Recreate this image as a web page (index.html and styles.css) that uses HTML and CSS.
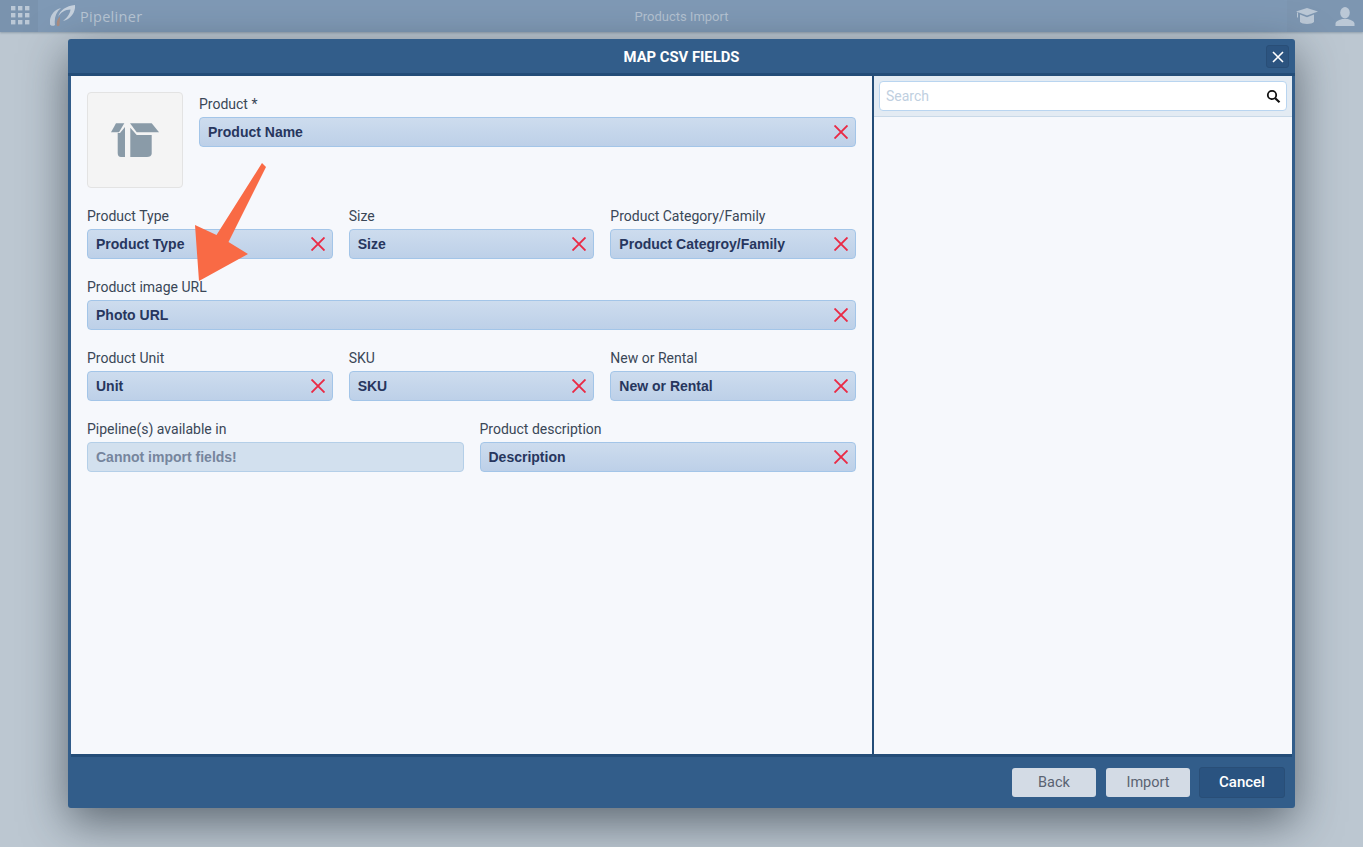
FILE: index.html
```html
<!DOCTYPE html>
<html lang="en">
<head>
<meta charset="utf-8">
<title>Products Import</title>
<link rel="stylesheet" href="styles.css">
</head>
<body>
<header class="topbar">
  <div class="apps">
    <svg class="apps-icon" width="20" height="20" viewBox="0 0 20 20"><g fill="#bbc8d6"><rect x="1" y="1" width="4.4" height="4.4"/><rect x="8" y="1" width="4.4" height="4.4"/><rect x="15" y="1" width="4.4" height="4.4"/><rect x="1" y="8" width="4.4" height="4.4"/><rect x="8" y="8" width="4.4" height="4.4"/><rect x="15" y="8" width="4.4" height="4.4"/><rect x="1" y="15" width="4.4" height="4.4"/><rect x="8" y="15" width="4.4" height="4.4"/><rect x="15" y="15" width="4.4" height="4.4"/></g></svg>
  </div>
  <div class="brand">
    <svg width="27" height="22" viewBox="50 5 27 22"><path d="M50 24.500C49 17 53 10 61 8c-5 4-7 10-6 17-1.500 1.200-3.800 1.200-5-.5z" fill="#c0ccd9"/><path d="M57 26c-1-3 0-6.500 3-9.500l-.5 9c-.8.700-1.700.800-2.500.5z" fill="#ab8d80"/><path d="M58 17c2-7 8-11 17-12 1 7-5 15-12 16 4-3 7-7 7.500-11.500C65 9.500 60 13 58 17z" fill="#c6d1dd"/></svg>
    <span class="brand-name">Pipeliner</span>
  </div>
  <div class="page-title">Products Import</div>
  <div class="top-action">
    <svg class="cap" width="22" height="17" viewBox="0 0 22 17"><path d="M11 0l11 3.500L11 7.500 0 3.500z" fill="#bbc8d6"/><path d="M4 6.500l7 2.700 7-2.700V14c-2 2.600-12 2.600-14 0z" fill="#bbc8d6"/><path d="M1.500 4.500v5" stroke="#bbc8d6" stroke-width="1" fill="none"/></svg>
  </div>
  <div class="top-action">
    <svg class="person" width="20" height="19" viewBox="0 0 20 19"><ellipse cx="10" cy="5.700" rx="4.800" ry="5.700" fill="#bbc8d6"/><path d="M.5 19v-2.500c0-2.500 4-3.500 6.500-4.500h6c2.500 1 6.500 2 6.500 4.500V19z" fill="#bbc8d6"/></svg>
  </div>
</header>

<section class="dialog">
  <div class="dialog-head">
    <h1 class="dialog-title">MAP CSV FIELDS</h1>
    <button class="close-btn" aria-label="Close">
      <svg width="12" height="12" viewBox="0 0 12 12"><path d="M1 1l10 10M11 1L1 11" stroke="#fff" stroke-width="1.600" fill="none"/></svg>
    </button>
  </div>
  <div class="dialog-body">
    <div class="form">
      <div class="row row-top">
        <div class="thumb">
          <svg width="48" height="35" viewBox="0 0 48 35"><g fill="#8a9ba8"><path d="M0 9.300L5 .3h8.300L8 9.300z"/><path d="M6.700 10H9l5-6v30h-4c-2.200 0-3.300-1.500-3.300-4z"/><path d="M19 .3h21.700L48 9.300H25.700z"/><path d="M19.300 4.700l6.400 7.300h15v18.700c0 2-2.200 3.300-4.700 3.300H19.300z"/></g></svg>
        </div>
        <div class="group">
          <label class="lbl">Product *</label>
          <div class="field"><span>Product Name</span><svg class="x" viewBox="0 0 14 14"><path d="M.5 .5l13 13M13.500 .5l-13 13"/></svg></div>
        </div>
      </div>
      <div class="row">
        <div class="group">
          <label class="lbl">Product Type</label>
          <div class="field"><span>Product Type</span><svg class="x" viewBox="0 0 14 14"><path d="M.5 .5l13 13M13.500 .5l-13 13"/></svg></div>
        </div>
        <div class="group">
          <label class="lbl">Size</label>
          <div class="field"><span>Size</span><svg class="x" viewBox="0 0 14 14"><path d="M.5 .5l13 13M13.500 .5l-13 13"/></svg></div>
        </div>
        <div class="group">
          <label class="lbl">Product Category/Family</label>
          <div class="field"><span>Product Categroy/Family</span><svg class="x" viewBox="0 0 14 14"><path d="M.5 .5l13 13M13.500 .5l-13 13"/></svg></div>
        </div>
      </div>
      <div class="row">
        <div class="group">
          <label class="lbl">Product image URL</label>
          <div class="field"><span>Photo URL</span><svg class="x" viewBox="0 0 14 14"><path d="M.5 .5l13 13M13.500 .5l-13 13"/></svg></div>
        </div>
      </div>
      <div class="row">
        <div class="group">
          <label class="lbl">Product Unit</label>
          <div class="field"><span>Unit</span><svg class="x" viewBox="0 0 14 14"><path d="M.5 .5l13 13M13.500 .5l-13 13"/></svg></div>
        </div>
        <div class="group">
          <label class="lbl">SKU</label>
          <div class="field"><span>SKU</span><svg class="x" viewBox="0 0 14 14"><path d="M.5 .5l13 13M13.500 .5l-13 13"/></svg></div>
        </div>
        <div class="group">
          <label class="lbl">New or Rental</label>
          <div class="field"><span>New or Rental</span><svg class="x" viewBox="0 0 14 14"><path d="M.5 .5l13 13M13.500 .5l-13 13"/></svg></div>
        </div>
      </div>
      <div class="row">
        <div class="group">
          <label class="lbl">Pipeline(s) available in</label>
          <div class="field field-off"><span>Cannot import fields!</span></div>
        </div>
        <div class="group">
          <label class="lbl">Product description</label>
          <div class="field"><span>Description</span><svg class="x" viewBox="0 0 14 14"><path d="M.5 .5l13 13M13.500 .5l-13 13"/></svg></div>
        </div>
      </div>
    </div>
    <aside class="side">
      <div class="search-bar">
        <div class="search">
          <span class="search-ph">Search</span>
          <svg width="15" height="15" viewBox="0 0 15 15"><circle cx="6" cy="6" r="4.200" fill="none" stroke="#111" stroke-width="1.800"/><path d="M9.200 9.200l4.300 4" stroke="#111" stroke-width="2.200" fill="none"/></svg>
        </div>
      </div>
    </aside>
  </div>
  <div class="dialog-foot">
    <button class="btn">Back</button>
    <button class="btn btn-import">Import</button>
    <button class="btn btn-primary">Cancel</button>
  </div>
</section>

<svg class="arrow" width="90" height="130" viewBox="0 0 90 130"><polygon points="72,1 76,5 38.500,80 58,92 9,119 5,63 26.500,73" fill="#f96a45"/></svg>
</body>
</html>
```

FILE: styles.css
```css
* { box-sizing: border-box; }
html, body { height: 100%; }
body {
  margin: 0;
  height: 847px;
  overflow: hidden;
  background: #bcc7d1;
  font-family: Roboto, "Liberation Sans", sans-serif;
  position: relative;
}
.topbar {
  height: 32px;
  background: #7f99b5;
  display: flex;
  align-items: center;
  position: relative;
  box-shadow: 0 1px 2px rgba(60, 80, 100, .35);
}
.apps {
  width: 38px;
  height: 32px;
  padding: 0 0 2px 2px;
  background: #7a93ae;
  display: flex;
  align-items: center;
  justify-content: center;
}
.brand {
  display: flex;
  align-items: center;
  gap: 3px;
  margin-left: 12px;
  flex: 1;
}
.brand-name {
  font-family: "Open Sans", sans-serif;
  font-size: 14.500px;
  color: #b9c6d4;
  letter-spacing: .3px;
}
.page-title {
  position: absolute;
  left: 0;
  right: 0;
  text-align: center;
  font-size: 13px;
  color: #b4c2d1;
  pointer-events: none;
}
.top-action {
  width: 38px;
  height: 32px;
  padding-left: 2px;
  background: #7d96b1;
  display: flex;
  align-items: center;
  justify-content: center;
}
.dialog {
  position: absolute;
  left: 68px;
  top: 39px;
  width: 1227px;
  height: 769px;
  background: #325d8a;
  border-radius: 3px;
  box-shadow: 0 14px 45px rgba(30, 40, 50, .6);
  display: flex;
  flex-direction: column;
}
.dialog-head {
  height: 37px;
  flex: none;
  border-bottom: 3px solid #244d78;
  display: flex;
  align-items: center;
  justify-content: center;
  position: relative;
}
.dialog-title {
  margin: 0;
  font-size: 14.800px;
  font-weight: 700;
  color: #fff;
  position: relative;
  top: 1px;
}
.close-btn {
  position: absolute;
  right: 6px;
  top: 6px;
  width: 23px;
  height: 23px;
  padding: 0;
  background: #2c5480;
  border: 1px solid #294e77;
  border-radius: 3px;
  display: flex;
  align-items: center;
  justify-content: center;
}
.dialog-body {
  height: 681px;
  flex: none;
  margin: 0 3px;
  display: flex;
  background: #f6f8fc;
  border-bottom: 3px solid #244d78;
}
.form {
  width: 801px;
  padding: 16px;
  display: flex;
  flex-direction: column;
  gap: 16px;
}
.row {
  display: flex;
  gap: 16px;
}
.row-top { align-items: flex-start; }
.thumb {
  width: 96px;
  height: 96px;
  flex: none;
  background: #f4f4f4;
  border: 1px solid #e3e3e3;
  border-radius: 4px;
  display: flex;
  align-items: center;
  justify-content: center;
}
.group {
  flex: 1 1 0;
  min-width: 0;
}
.lbl {
  display: block;
  height: 25px;
  line-height: 24px;
  font-size: 14px;
  color: #3a4757;
}
.field {
  height: 30px;
  padding: 0 8px;
  display: flex;
  align-items: center;
  justify-content: space-between;
  background: linear-gradient(#cddcee, #bdd0e8);
  border: 1px solid #a3c5e8;
  border-radius: 4px;
  font-family: "Liberation Sans", Arial, sans-serif;
  font-size: 14px;
  font-weight: 700;
  color: #27365e;
}
.field-off {
  background: #d2e0ee;
  color: #76859d;
  border-color: #b4cfe8;
}
.x {
  width: 14px;
  height: 14px;
  margin-right: -1px;
  flex: none;
  fill: none;
  stroke: #ea2a45;
  stroke-width: 1.900;
}
.side {
  flex: 1;
  border-left: 2px solid #244d78;
}
.search-bar {
  height: 41px;
  padding: 5px;
  background: #e3ebf3;
  border-bottom: 1px solid #c9d9e8;
}
.search {
  height: 30px;
  background: #fff;
  border: 1px solid #b9d5f0;
  border-radius: 4px;
  padding: 0 5px 0 6px;
  display: flex;
  align-items: center;
  justify-content: space-between;
}
.search-ph {
  font-size: 14px;
  color: #c0cfdf;
}
.dialog-foot {
  flex: 1;
  display: flex;
  align-items: flex-start;
  justify-content: flex-end;
  padding: 10px 10px 0 0;
  gap: 10px;
}
.btn {
  width: 84px;
  height: 29px;
  margin-top: 1px;
  padding: 0;
  background: #d3dbe5;
  border: 0;
  border-radius: 3px;
  font-family: Roboto, sans-serif;
  font-size: 14.500px;
  color: #5a6372;
}
.btn-primary {
  width: 86px;
  height: 31px;
  margin: 0 0 0 -1px;
  padding-bottom: 2px;
  background: #2a5380;
  border: 1px solid #294e77;
  color: #fff;
  font-size: 15px;
  font-weight: 500;
}
.arrow {
  position: absolute;
  left: 190px;
  top: 162px;
}
```
